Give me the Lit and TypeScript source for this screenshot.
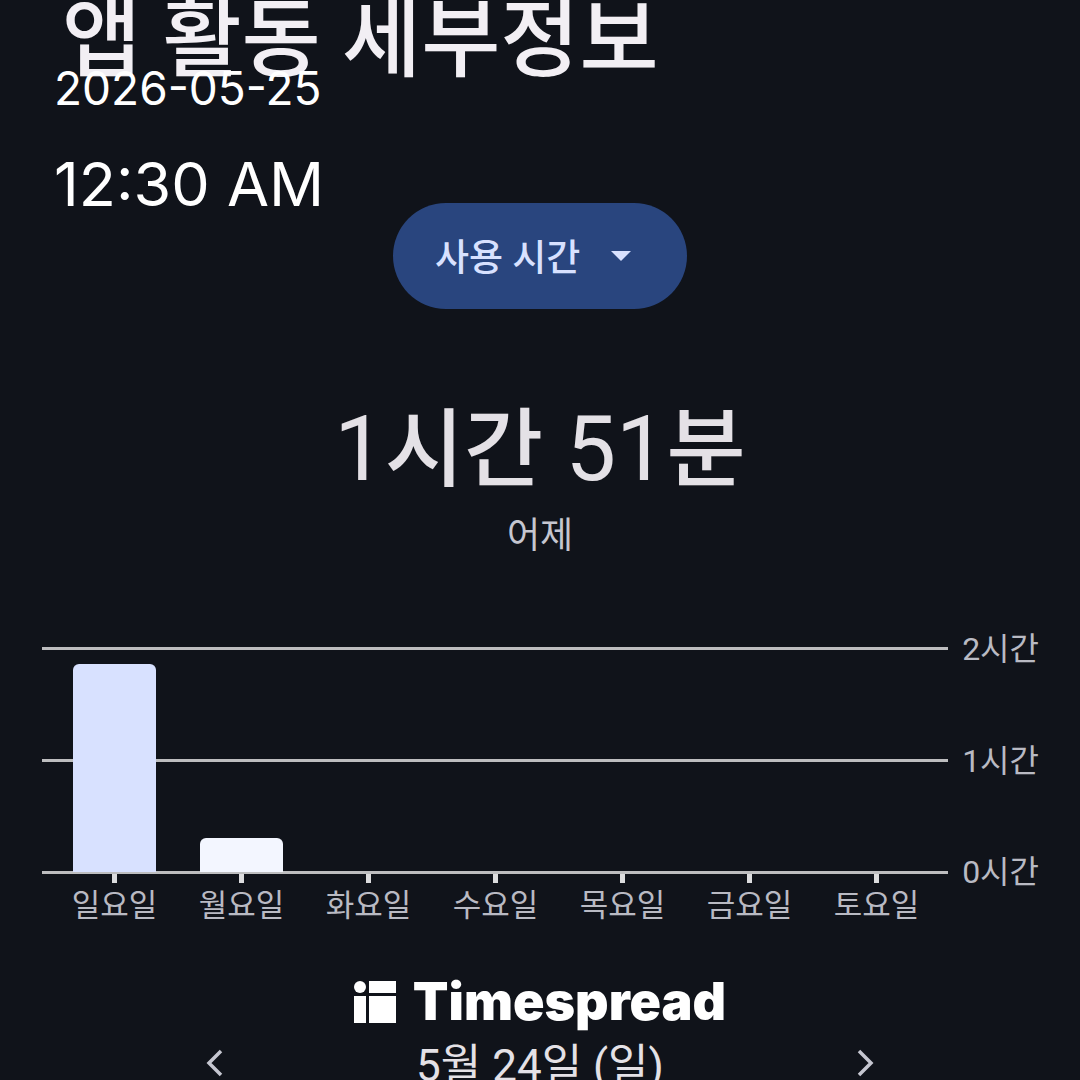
import { LitElement, html, css } from "lit";
import { customElement, property, state } from "lit/decorators.js";

interface DayUsage {
  label: string;
  minutes: number;
  selected?: boolean;
}

const MAX_MINUTES = 120;

/** Bar chart of the minutes spent in the app on each day of the week. */
@customElement("usage-chart")
export class UsageChart extends LitElement {
  @property({ attribute: false }) days: DayUsage[] = [];

  static styles = css`
    :host {
      display: grid;
      grid-template-columns: minmax(0, 1fr) auto;
      column-gap: 14px;
      color: #b9bac3;
    }
    .plot {
      display: grid;
      height: 227px;
    }
    .lines,
    .bars {
      grid-area: 1 / 1;
    }
    .lines {
      display: flex;
      flex-direction: column;
      justify-content: space-between;
    }
    .line {
      height: 3px;
      background: #bdbdbf;
    }
    .bars,
    .days {
      display: grid;
      grid-template-columns: repeat(7, minmax(0, 1fr));
      padding: 0 8px 0 9px;
    }
    .bars {
      align-items: end;
      justify-items: center;
      padding-bottom: 2px;
    }
    .bar {
      width: 65%;
      border-radius: 6px 6px 0 0;
      background: #f3f6ff;
    }
    .bar.selected {
      background: #d8e1ff;
    }
    .axis {
      display: flex;
      flex-direction: column;
      justify-content: space-between;
      height: 263px;
      margin: -18px 0;
      font-size: 32px;
      line-height: 40px;
    }
    .day {
      display: flex;
      flex-direction: column;
      align-items: center;
      font-size: 31px;
      line-height: 46px;
      white-space: nowrap;
    }
    .tick {
      width: 5px;
      height: 9px;
      background: #dcdcde;
    }
  `;

  render() {
    return html`
      <div class="plot">
        <div class="lines">
          <div class="line"></div>
          <div class="line"></div>
          <div class="line"></div>
        </div>
        <div class="bars">
          ${this.days.map(
            (d) => html`<div
              class="bar ${d.selected ? "selected" : ""}"
              style="height:${(d.minutes / MAX_MINUTES) * 100}%"
            ></div>`
          )}
        </div>
      </div>
      <div class="axis">
        <span>2시간</span>
        <span>1시간</span>
        <span>0시간</span>
      </div>
      <div class="days">
        ${this.days.map(
          (d) => html`<div class="day"><span class="tick"></span>${d.label}</div>`
        )}
      </div>
    `;
  }
}

@customElement("app-root")
export class AppRoot extends LitElement {
  @state() private days: DayUsage[] = [
    { label: "일요일", minutes: 111, selected: true },
    { label: "월요일", minutes: 18 },
    { label: "화요일", minutes: 0 },
    { label: "수요일", minutes: 0 },
    { label: "목요일", minutes: 0 },
    { label: "금요일", minutes: 0 },
    { label: "토요일", minutes: 0 },
  ];

  static styles = css`
    :host {
      display: block;
      position: relative;
      height: 100vh;
      overflow: hidden;
      background: #10131a;
      color: #e4e1e6;
      font-family: Roboto, "Noto Sans CJK KR", sans-serif;
    }
    .page {
      display: flex;
      flex-direction: column;
    }
    .title {
      margin: -11px 62px 0;
      font-size: 86px;
      line-height: 104px;
      font-weight: 500;
      color: #f2eff4;
    }
    .metric {
      display: grid;
      align-items: center;
      align-self: center;
      margin-top: 110px;
      color: #d8e1ff;
    }
    .select {
      grid-area: 1 / 1;
      appearance: none;
      box-sizing: border-box;
      height: 106px;
      padding: 4px 106px 0 42px;
      border: 0;
      border-radius: 53px;
      background: #29457e;
      color: inherit;
      font: inherit;
      font-size: 37px;
      font-weight: 500;
    }
    .caret {
      grid-area: 1 / 1;
      justify-self: end;
      width: 20px;
      height: 10px;
      margin-right: 56px;
      fill: currentColor;
      pointer-events: none;
    }
    .summary {
      display: flex;
      flex-direction: column;
      align-items: center;
      margin-top: 89px;
    }
    .total {
      margin: 0;
      font-size: 90px;
      line-height: 104px;
      font-weight: 400;
    }
    .unit {
      font-size: 86px;
      font-weight: 500;
    }
    .when {
      margin: 9px 0 0;
      font-size: 36px;
      line-height: 48px;
      color: #c5c6d0;
    }
    .chart {
      margin: 87px 41px 0 42px;
    }
    .pager {
      display: flex;
      justify-content: space-between;
      align-items: center;
      margin: 103px 190px 0;
      font-size: 44px;
      line-height: 56px;
    }
    .shown {
      padding-top: 6px;
    }
    .arrow {
      display: grid;
      place-items: center;
      width: 48px;
      height: 48px;
      padding: 0;
      border: 0;
      background: none;
      color: #c5c6d0;
    }
    .arrow svg {
      width: 18px;
      height: 28px;
      fill: none;
      stroke: currentColor;
      stroke-width: 3.5;
    }
    .stamp {
      position: absolute;
      top: 58px;
      left: 54px;
      display: flex;
      flex-direction: column;
      gap: 28px;
      color: #fff;
      font-family: Inter, sans-serif;
    }
    .date {
      font-size: 46px;
      line-height: 60px;
    }
    .clock {
      font-size: 61px;
      line-height: 76px;
    }
    .brand {
      position: absolute;
      right: 0;
      bottom: 48px;
      left: 0;
      display: flex;
      justify-content: center;
      align-items: center;
      gap: 17px;
      color: #fff;
      font-family: Inter, sans-serif;
      font-size: 52px;
      line-height: 60px;
      font-weight: 900;
    }
    .brand svg {
      width: 42px;
      height: 42px;
      fill: currentColor;
    }
  `;

  render() {
    return html`
      <main class="page">
        <h1 class="title">앱 활동 세부정보</h1>
        <label class="metric">
          <select class="select" aria-label="사용 시간">
            <option>사용 시간</option>
          </select>
          <svg class="caret" viewBox="0 0 20 10" aria-hidden="true">
            <path d="M0 0h20L10 10z" />
          </svg>
        </label>
        <section class="summary">
          <h2 class="total">1<span class="unit">시간</span> 51<span class="unit">분</span></h2>
          <p class="when">어제</p>
        </section>
        <usage-chart class="chart" .days=${this.days}></usage-chart>
        <nav class="pager">
          <button class="arrow" aria-label="이전">
            <svg viewBox="0 0 18 28"><path d="M16 2L4 14l12 12" /></svg>
          </button>
          <span class="shown">5월 24일 (일)</span>
          <button class="arrow" aria-label="다음">
            <svg viewBox="0 0 18 28"><path d="M2 2l12 12L2 26" /></svg>
          </button>
        </nav>
      </main>
      <div class="stamp">
        <time class="date">2026-05-25</time>
        <time class="clock">12:30 AM</time>
      </div>
      <div class="brand">
        <svg viewBox="0 0 42 42" aria-hidden="true">
          <circle cx="6" cy="6" r="6" />
          <path d="M15 0h27v12H15zM0 15h12v27H0zM15 15h27v27H15z" />
        </svg>
        <span>Timespread</span>
      </div>
    `;
  }
}
